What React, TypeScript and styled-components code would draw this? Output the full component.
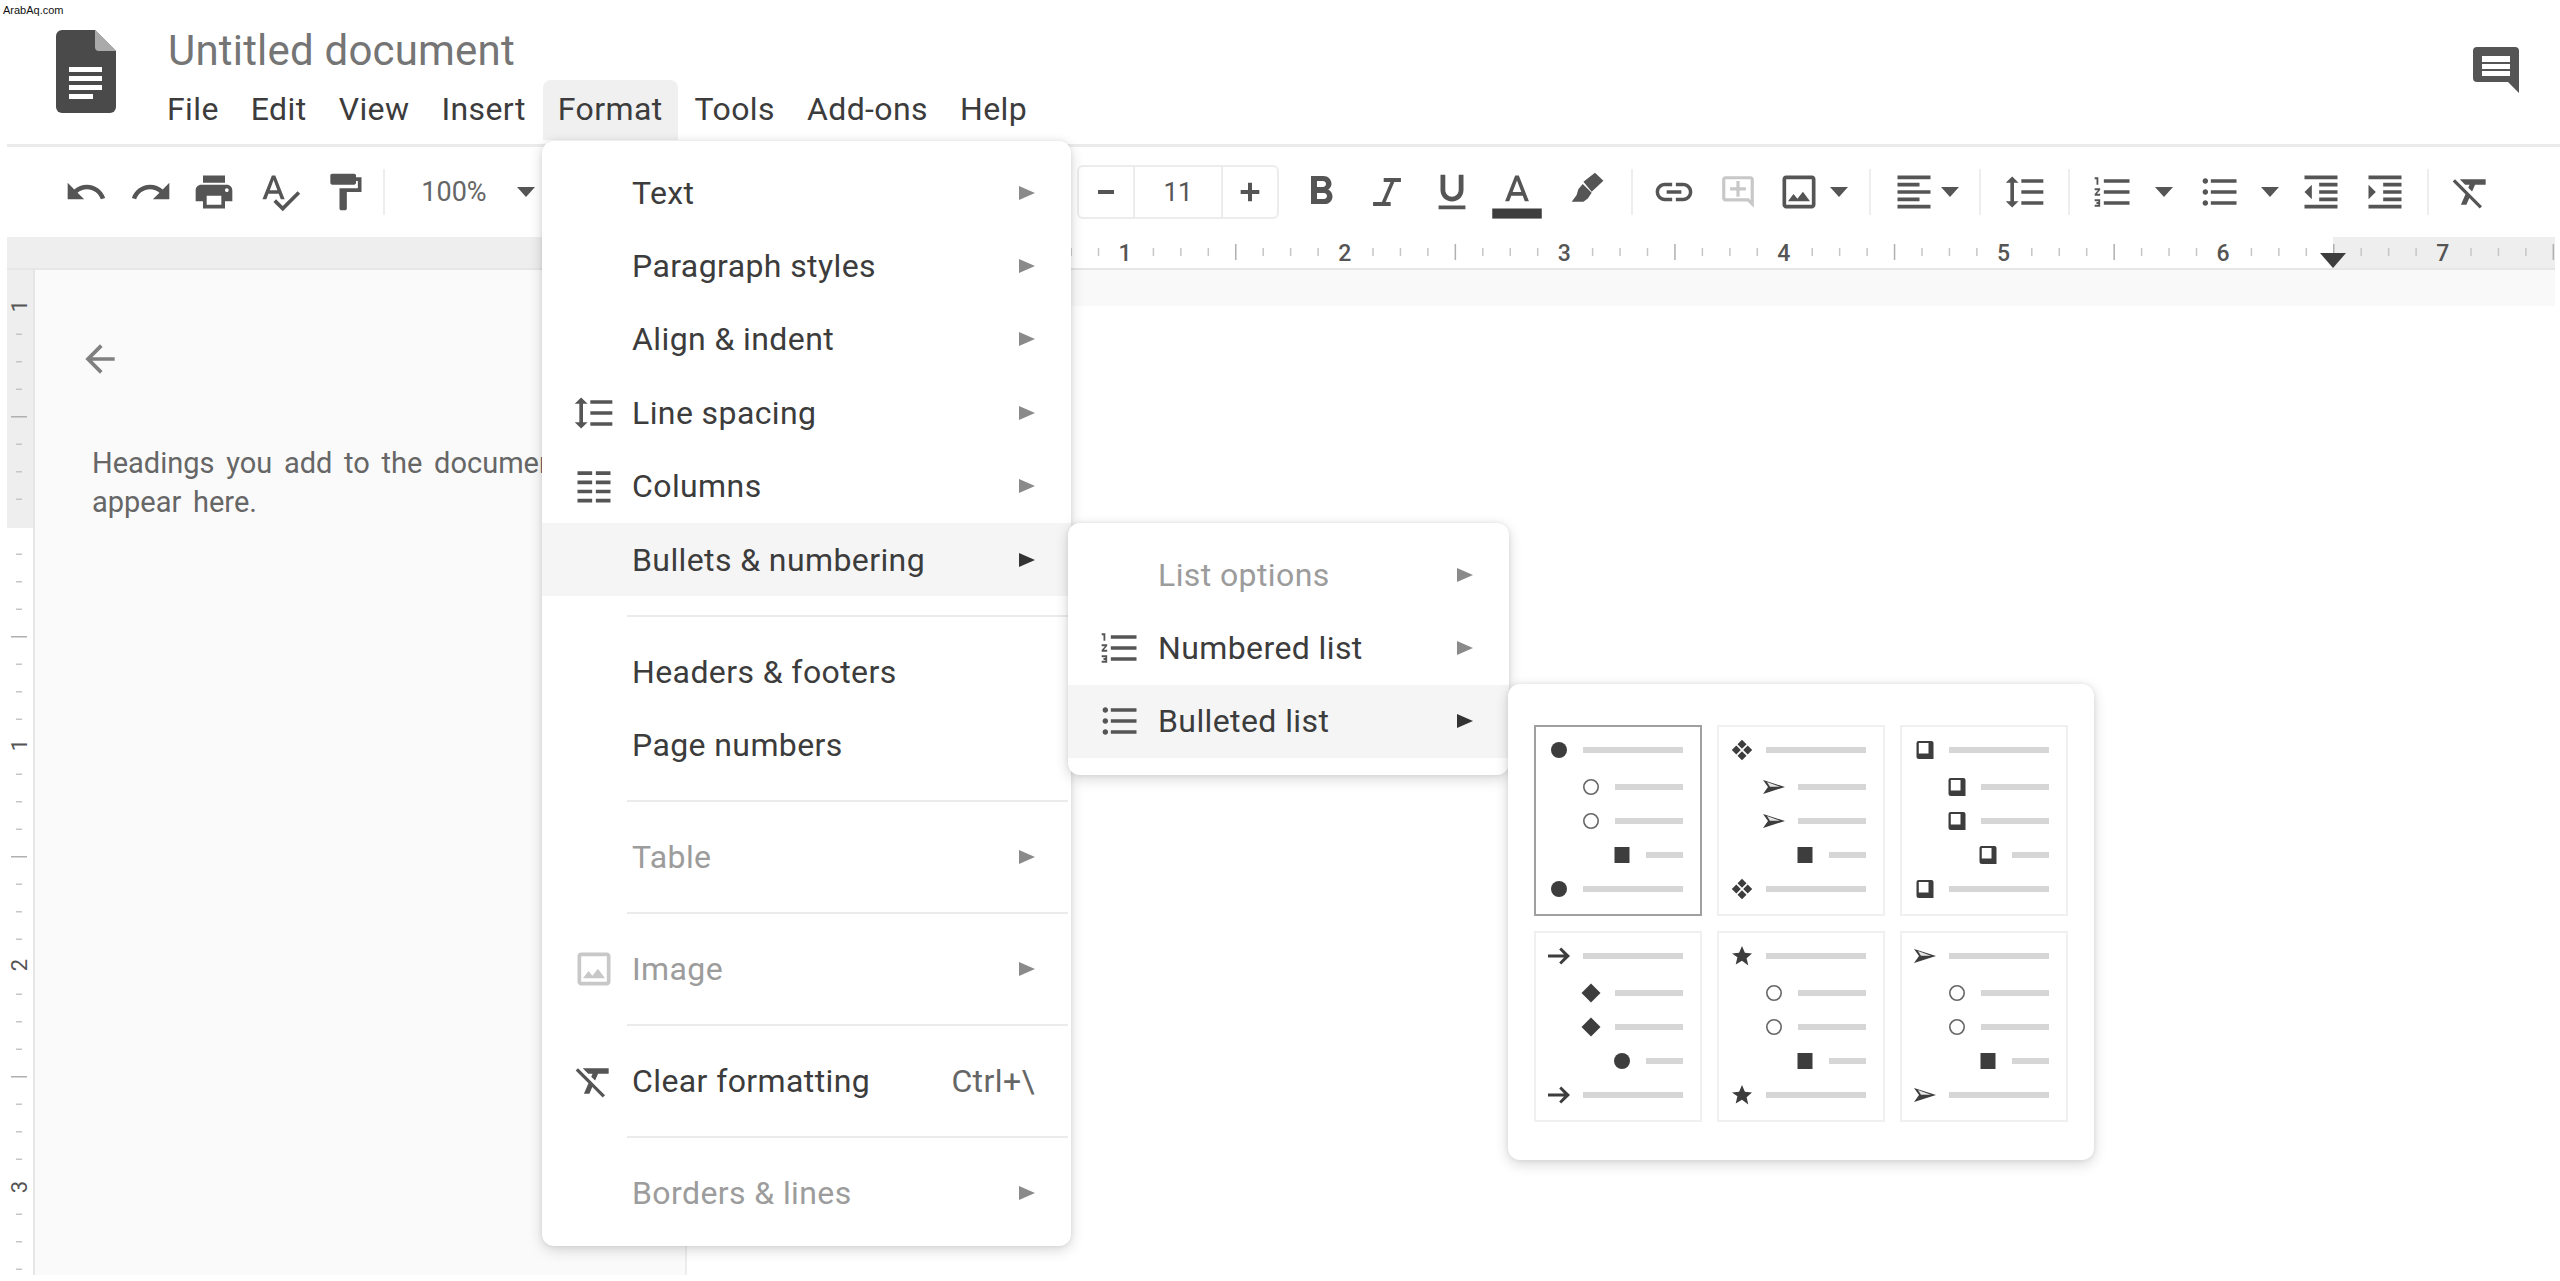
import React from "react";
import styled, { createGlobalStyle } from "styled-components";

const GlobalStyle = createGlobalStyle`
  html, body {
    margin: 0;
    padding: 0;
    background: #fff;
  }
  * {
    box-sizing: border-box;
  }
`;

const ICONS = {
  undo: "M12.5 8c-2.65 0-5.05.99-6.9 2.6L2 7v9h9l-3.62-3.62c1.39-1.16 3.16-1.88 5.12-1.88 3.54 0 6.55 2.31 7.6 5.5l2.37-.78C21.08 11.03 17.15 8 12.5 8z",
  redo: "M18.4 10.6C16.55 8.99 14.15 8 11.5 8c-4.65 0-8.58 3.03-9.96 7.22L3.9 16c1.05-3.19 4.05-5.5 7.6-5.5 1.95 0 3.73.72 5.12 1.88L13 16h9V7l-3.6 3.6z",
  print: "M19 8H5c-1.66 0-3 1.34-3 3v6h4v4h12v-4h4v-6c0-1.66-1.34-3-3-3zm-3 11H8v-5h8v5zm3-7c-.55 0-1-.45-1-1s.45-1 1-1 1 .45 1 1-.45 1-1 1zm-1-9H6v4h12V3z",
  spell: "M12.45 16h2.09L9.43 3H7.57L2.46 16h2.09l1.12-3h5.64l1.14 3zm-6.02-5L8.5 5.48 10.57 11H6.43zm15.16.59l-8.09 8.09L9.83 16l-1.41 1.41 5.09 5.09L23 13l-1.41-1.41z",
  paint: "M18 4V3c0-.55-.45-1-1-1H5c-.55 0-1 .45-1 1v4c0 .55.45 1 1 1h12c.55 0 1-.45 1-1V6h1v4H9v11c0 .55.45 1 1 1h2c.55 0 1-.45 1-1v-9h8V4h-3z",
  bold: "M15.6 10.79c.97-.67 1.65-1.77 1.65-2.79 0-2.26-1.75-4-4-4H7v14h7.04c2.09 0 3.71-1.7 3.71-3.79 0-1.52-.86-2.82-2.15-3.42zM10 6.5h3c.83 0 1.5.67 1.5 1.5s-.67 1.5-1.5 1.5h-3v-3zm3.5 9H10v-3h3.5c.83 0 1.5.67 1.5 1.5s-.67 1.5-1.5 1.5z",
  italic: "M10.2 4.4h9.4v2.2H16l-4.7 10.800H14v2.2H4.400v-2.200h4.800l4.700-10.800h-3.700z",
  underline: "M12 17c3.31 0 6-2.69 6-6V3h-2.5v8c0 1.93-1.57 3.5-3.5 3.5S8.5 12.93 8.5 11V3H6v8c0 3.31 2.69 6 6 6zm-7 2v2h14v-2H5z",
  textColor: "M11 3L5.5 17h2.25l1.12-3h6.25l1.12 3h2.25L13 3h-2zm-1.38 9L12 5.67 14.38 12H9.62z",
  marker: "M10.6 6.400L16.900 1.500l4.600 4.300-6.400 6.100zM10.200 7.700l4.900 4.700L13 15.500l-2.400 1.800H4.200l2.700-3.600.900-3.200z",
  link: "M3.9 12c0-1.71 1.39-3.1 3.1-3.1h4V7H7c-2.76 0-5 2.24-5 5s2.24 5 5 5h4v-1.9H7c-1.71 0-3.1-1.39-3.1-3.1zM8 13h8v-2H8v2zm9-6h-4v1.9h4c1.71 0 3.1 1.39 3.1 3.1s-1.39 3.1-3.1 3.1h-4V17h4c2.76 0 5-2.24 5-5s-2.24-5-5-5z",
  addComment: "M22 4c0-1.1-.9-2-2-2H4c-1.1 0-2 .9-2 2v12c0 1.1.9 2 2 2h14l4 4V4zm-2 13.17L18.83 16H4V4h16v13.17zM13 5h-2v4H7v2h4v4h2v-4h4V9h-4z",
  image: "M19 5v14H5V5h14m0-2H5c-1.1 0-2 .9-2 2v14c0 1.1.9 2 2 2h14c1.1 0 2-.9 2-2V5c0-1.1-.9-2-2-2zm-4.86 8.86l-3 3.87L9 13.14 6 17h12l-3.86-5.14z",
  alignLeft: "M15 15H3v2h12v-2zm0-8H3v2h12V7zM3 13h18v-2H3v2zm0 8h18v-2H3v2zM3 3v2h18V3H3z",
  lineSpacing: "M6 7h2.5L5 3.5 1.5 7H4v10H1.5L5 20.5 8.5 17H6V7zm4-2v2h12V5H10zm0 14h12v-2H10v2zm0-6h12v-2H10v2z",
  numbered: "M2 17h2v.5H3v1h1v.5H2v1h3v-4H2v1zm1-9h1V4H2v1h1v3zm-1 3h1.8L2 13.1v.9h3v-1H3.2L5 10.9V10H2v1zm5-6v2h14V5H7zm0 14h14v-2H7v2zm0-6h14v-2H7v2z",
  bulleted: "M4 10.5c-.83 0-1.5.67-1.5 1.5s.67 1.5 1.5 1.5 1.5-.67 1.5-1.5-.67-1.5-1.5-1.5zm0-6c-.83 0-1.5.67-1.5 1.5S3.17 7.5 4 7.5 5.5 6.83 5.5 6 4.83 4.5 4 4.5zm0 12c-.83 0-1.5.68-1.5 1.5s.68 1.5 1.5 1.5 1.5-.68 1.5-1.5-.67-1.5-1.5-1.5zM7 19h14v-2H7v2zm0-6h14v-2H7v2zm0-8v2h14V5H7z",
  indentLess: "M11 17h10v-2H11v2zm-8-5l4 4V8l-4 4zm0 9h18v-2H3v2zM3 3v2h18V3H3zm8 6h10V7H11v2zm0 4h10v-2H11v2z",
  indentMore: "M3 21h18v-2H3v2zM3 8v8l4-4-4-4zm8 9h10v-2H11v2zM3 3v2h18V3H3zm8 6h10V7H11v2zm0 4h10v-2H11v2z",
  clear: "M3.27 5L2 6.27l6.97 6.97L6.5 19h3l1.57-3.66L16.73 21 18 19.73 3.55 5.27 3.27 5zM6 5v.18L8.82 8h2.4l-.72 1.68 2.1 2.1L14.21 8H20V5H6z",
  back: "M20 11H7.83l5.59-5.59L12 4l-8 8 8 8 1.41-1.41L7.83 13H20v-2z",
  columns: "M3 4h8v2H3zM13 4h8v2h-8zM3 9h8v2H3zM13 9h8v2h-8zM3 14h8v2H3zM13 14h8v2h-8zM3 19h8v2H3zM13 19h8v2h-8z",
  minus: "M6 10.5h12v3H6z",
  plus: "M10.5 5h3v5.5H19v3h-5.5V19h-3v-5.5H5v-3h5.5z",
};

type IconName = keyof typeof ICONS;

const Svg = styled.svg<{ $color?: string }>`
  display: block;
  flex-shrink: 0;
  overflow: visible;
  fill: ${(p) => p.$color || "#555"};
`;

function Glyph({
  name,
  size = 44,
  color,
  children,
}: {
  name: IconName;
  size?: number;
  color?: string;
  children?: React.ReactNode;
}) {
  return (
    <Svg $color={color} width={size} height={size} viewBox="0 0 24 24">
      <path d={ICONS[name]} />
      {children}
    </Svg>
  );
}

const Page = styled.div`
  position: relative;
  width: 2560px;
  height: 1281px;
  overflow: hidden;
  background: #fff;
  font-family: Roboto, "Liberation Sans", sans-serif;
  color: #3c3c3c;
`;

const Watermark = styled.div`
  position: absolute;
  left: 3px;
  top: 2px;
  font-family: "Liberation Sans", Arial, sans-serif;
  font-size: 11px;
  line-height: 16px;
  color: #111;
`;

const Header = styled.header`
  display: flex;
  align-items: flex-start;
  height: 144px;
  padding: 30px 41px 0 56px;
`;

const TitleColumn = styled.div`
  display: flex;
  flex-direction: column;
  margin: -2px 0 0 36px;
`;

const Title = styled.div`
  height: 52px;
  margin-left: 16px;
  padding-top: 2px;
  font-size: 42px;
  line-height: 42px;
  letter-spacing: 0.2px;
  color: #757575;
`;

const MenuBar = styled.nav`
  display: flex;
  gap: 2px;
`;

const MenuItem = styled.div<{ $open?: boolean }>`
  height: 60px;
  padding: 0 15px;
  font-size: 32px;
  line-height: 58px;
  letter-spacing: 0.4px;
  border-radius: 8px 8px 0 0;
  background: ${(p) => (p.$open ? "#f0f0f0" : "transparent")};
`;

const CommentButton = styled.svg`
  display: block;
  margin: 17px 0 0 auto;
`;

const Toolbar = styled.div`
  display: flex;
  align-items: center;
  height: 93px;
  margin-left: 7px;
  padding: 0 57px 0 47px;
  border-top: 3px solid #ebebeb;
`;

const ToolGroup = styled.div`
  display: flex;
  align-items: center;
`;

const RightTools = styled(ToolGroup)`
  margin-left: auto;
`;

const Tool = styled.div<{ $w: number }>`
  display: flex;
  align-items: center;
  justify-content: center;
  width: ${(p) => p.$w}px;
  height: 54px;
`;

const ToolDivider = styled.div<{ $w: number }>`
  display: flex;
  justify-content: center;
  width: ${(p) => p.$w}px;
  &::before {
    content: "";
    display: block;
    width: 2px;
    height: 46px;
    background: #eee;
  }
`;

const Caret = styled.div`
  width: 0;
  height: 0;
  border-left: 9px solid transparent;
  border-right: 9px solid transparent;
  border-top: 10px solid #555;
`;

const ZoomValue = styled.div`
  font-size: 27px;
  color: #666;
`;

const FontSizeBox = styled.div`
  display: flex;
  width: 202px;
  height: 54px;
  margin-right: 10px;
  border: 2px solid #ececec;
  border-radius: 6px;
`;

const FontSizeButton = styled.div`
  display: flex;
  align-items: center;
  justify-content: center;
  width: 54px;
`;

const FontSizeValue = styled.div`
  display: flex;
  align-items: center;
  justify-content: center;
  flex: 1;
  border-left: 2px solid #ececec;
  border-right: 2px solid #ececec;
  font-size: 26px;
  color: #555;
`;

const RulerRow = styled.div`
  display: flex;
  height: 33px;
  margin: 0 5px 0 7px;
  background: #eee;
  border-bottom: 2px solid #e6e6e6;
`;

const Workspace = styled.div`
  display: flex;
  height: 1005px;
  margin-left: 7px;
`;

const Sidebar = styled.aside`
  width: 654px;
  padding: 67px 0 0 43px;
  background: #fafafa;
  border-left: 2px solid #e6e6e6;
  border-right: 2px solid #ededed;
`;

const SidebarText = styled.p`
  width: 590px;
  margin: 63px 0 0 14px;
  font-size: 29px;
  line-height: 39px;
  word-spacing: 4.5px;
  color: #666;
`;

const Canvas = styled.main`
  flex: 1;
  margin-right: 5px;
`;

const CanvasBand = styled.div`
  height: 36px;
  background: #f9f9f9;
`;

const Dropdown = styled.div`
  position: absolute;
  z-index: 3;
  background: #fff;
  border-radius: 12px;
  box-shadow: 0 4px 14px rgba(0, 0, 0, 0.16), 0 0 5px rgba(0, 0, 0, 0.08);
`;

const FormatMenu = styled(Dropdown)`
  left: 542px;
  top: 141px;
  width: 529px;
  height: 1105px;
  padding-top: 15px;
`;

const ListMenu = styled(Dropdown)`
  z-index: 4;
  left: 1068px;
  top: 523px;
  width: 441px;
  height: 252px;
  padding: 15px 0 18px;
`;

const BulletPanel = styled(Dropdown)`
  z-index: 5;
  left: 1508px;
  top: 684px;
  width: 586px;
  height: 476px;
  padding: 41px 26px 38px;
`;

const Row = styled.div<{ $active?: boolean; $disabled?: boolean }>`
  display: flex;
  align-items: center;
  height: 73.4px;
  padding: 0 36px 0 30px;
  font-size: 32px;
  letter-spacing: 0.4px;
  background: ${(p) => (p.$active ? "#f5f5f5" : "transparent")};
  color: ${(p) => (p.$disabled ? "#9c9c9c" : "#3c3c3c")};
`;

const RowIcon = styled.div`
  flex: 0 0 60px;
  display: flex;
`;

const RowLabel = styled.div`
  flex: 1;
`;

const RowArrow = styled.div<{ $active?: boolean }>`
  width: 0;
  height: 0;
  border-top: 7.5px solid transparent;
  border-bottom: 7.5px solid transparent;
  border-left: 16px solid ${(p) => (p.$active ? "#333" : "#8a8a8a")};
`;

const Shortcut = styled.div`
  color: #666;
`;

const Separator = styled.div`
  height: 2px;
  margin: 18.3px 3px 18.3px 85px;
  background: #ebebeb;
`;

const BulletGrid = styled.div`
  display: grid;
  grid-template-columns: repeat(3, 168px);
  grid-auto-rows: 191px;
  gap: 15px;
`;

const BulletCell = styled.div<{ $selected?: boolean }>`
  padding: 6px 17px 0 0;
  border: 2px solid ${(p) => (p.$selected ? "#a0a0a0" : "#f0f0f0")};
`;

const BulletRow = styled.div<{ $level: number }>`
  display: flex;
  align-items: center;
  gap: 15px;
  height: 34px;
  padding-left: ${(p) => 14 + p.$level * 31.5}px;
  &:first-child {
    margin-bottom: 3px;
  }
`;

const BulletSlot = styled.div`
  display: flex;
  justify-content: center;
  width: 18px;
`;

const BulletLine = styled.div`
  flex: 1;
  height: 6px;
  background: #d6d6d6;
`;

type BulletKind = "disc" | "hollow" | "square" | "four" | "send" | "box" | "diamond" | "star" | "arrow";

function BulletMark({ kind }: { kind: BulletKind }) {
  return (
    <Svg $color="#3d3d3d" width={24} height={24} viewBox="0 0 24 24">
      {kind === "disc" && <circle cx="12" cy="12" r="8" />}
      {kind === "hollow" && <circle cx="12" cy="12" r="7.2" fill="#fff" stroke="#666" strokeWidth="1.6" />}
      {kind === "square" && <rect x="4.5" y="4" width="15" height="16" />}
      {kind === "four" && (
        <path d="M12 1.800l4.500 4.500-4.500 4.500-4.500-4.500zM12 13.200l4.500 4.500-4.500 4.500-4.500-4.500zM6.300 7.500l4.500 4.500-4.500 4.500L1.800 12zM17.700 7.500l4.500 4.500-4.500 4.500-4.500-4.500z" />
      )}
      {kind === "send" && (
        <>
          <path d="M1 5l22 7-22 7 5-7z" />
          <path d="M5 7l13 4.800H8z" fill="#e6e6e6" />
        </>
      )}
      {kind === "box" && (
        <>
          <path d="M5.500 3H18.500a2 2 0 0 1 2 2v16H6a2.500 2.500 0 0 1-2.500-2.500V5a2 2 0 0 1 2-2z" />
          <rect x="5.800" y="5" width="9.700" height="10.500" fill="#fff" />
        </>
      )}
      {kind === "diamond" && <path d="M12 2.500l9.500 9.500-9.500 9.500L2.500 12z" />}
      {kind === "star" && <path d="M12 2l2.900 6.800 7.100.6-5.400 4.800 1.700 7.300L12 16.700l-6.300 3.800 1.700-7.300L2 9.400l7.100-.6z" />}
      {kind === "arrow" && (
        <path d="M1 10.400h16l-4.800-4.800 2-2L23 12l-8.800 8.400-2-2 4.800-4.800H1z" />
      )}
    </Svg>
  );
}

const BULLET_STYLES: BulletKind[][] = [
  ["disc", "hollow", "hollow", "square", "disc"],
  ["four", "send", "send", "square", "four"],
  ["box", "box", "box", "box", "box"],
  ["arrow", "diamond", "diamond", "disc", "arrow"],
  ["star", "hollow", "hollow", "square", "star"],
  ["send", "hollow", "hollow", "square", "send"],
];

const LEVELS = [0, 1, 1, 2, 0];

type MenuRowProps = {
  label: string;
  icon?: IconName;
  iconColor?: string;
  arrow?: boolean;
  active?: boolean;
  disabled?: boolean;
  shortcut?: string;
};

function MenuRow({ label, icon, iconColor, arrow = true, active, disabled, shortcut }: MenuRowProps) {
  return (
    <Row $active={active} $disabled={disabled}>
      <RowIcon>{icon && <Glyph name={icon} color={iconColor} />}</RowIcon>
      <RowLabel>{label}</RowLabel>
      {shortcut && <Shortcut>{shortcut}</Shortcut>}
      {arrow && <RowArrow $active={active} />}
    </Row>
  );
}

function TopRuler() {
  const ticks = [];
  // inch = 219.6px, one tick each eighth
  for (let i = 0; i < 70; i++) {
    const x = 686 + i * 27.45;
    const k = i % 8;
    if (k === 0) continue;
    ticks.push(
      <rect key={i} x={x} y={k === 4 ? 7 : 11} width="1.500" height={k === 4 ? 16 : 8} fill={k === 4 ? "#b0b0b0" : "#c6c6c6"} />
    );
  }
  return (
    <svg width="1868" height="31" viewBox="687 0 1868 31" style={{ display: "block", marginLeft: "auto" }}>
      <rect x="687" y="0" width="1646" height="31" fill="#fff" />
      {ticks}
      {[1, 2, 3, 4, 5, 6, 7].map((n) => (
        <text key={n} x={905.500 + n * 219.600} y="24" textAnchor="middle" fontSize="23" fontWeight="500" fontFamily="Roboto, sans-serif" fill="#555">
          {n}
        </text>
      ))}
      <path d="M2320 16h26l-13 15z" fill="#3d3d3d" />
    </svg>
  );
}

function SideRuler() {
  const ticks = [];
  for (let i = 0; i < 36; i++) {
    const y = 306 + i * 27.5;
    const k = i % 8;
    if (k === 0) continue;
    ticks.push(
      <rect key={i} x={k === 4 ? 4 : 9} y={y} width={k === 4 ? 16 : 6} height="1.500" fill={k === 4 ? "#b0b0b0" : "#c6c6c6"} />
    );
  }
  const digits: [string, number][] = [
    ["1", 306],
    ["1", 745],
    ["2", 965],
    ["3", 1187],
  ];
  return (
    <svg width="26" height="1005" viewBox="7 270 26 1005" style={{ display: "block", flexShrink: 0 }}>
      <rect x="7" y="270" width="26" height="258" fill="#eee" />
      <g transform="translate(7 0)">
        {ticks}
        {digits.map(([d, y]) => (
          <text key={y} transform={`translate(20 ${y}) rotate(-90)`} textAnchor="middle" fontSize="22" fontFamily="Roboto, sans-serif" fill="#555">
            {d}
          </text>
        ))}
      </g>
    </svg>
  );
}

export default function App() {
  return (
    <Page>
      <GlobalStyle />
      <Watermark>ArabAq.com</Watermark>
      <Header>
        <svg width="60" height="83" viewBox="0 0 60 83" style={{ display: "block", flexShrink: 0 }}>
          <path d="M6 0h33l21 21v56a6 6 0 0 1-6 6H6a6 6 0 0 1-6-6V6a6 6 0 0 1 6-6z" fill="#4a4a4a" />
          <path d="M39 0l21 21H43a4 4 0 0 1-4-4z" fill="#aaa" />
          <path d="M13 37h33v5H13zM13 46h33v5H13zM13 55h33v5H13zM13 64h24v5H13z" fill="#fff" />
        </svg>
        <TitleColumn>
          <Title>Untitled document</Title>
          <MenuBar>
            <MenuItem>File</MenuItem>
            <MenuItem>Edit</MenuItem>
            <MenuItem>View</MenuItem>
            <MenuItem>Insert</MenuItem>
            <MenuItem $open>Format</MenuItem>
            <MenuItem>Tools</MenuItem>
            <MenuItem>Add-ons</MenuItem>
            <MenuItem>Help</MenuItem>
          </MenuBar>
        </TitleColumn>
        <CommentButton width="46" height="46" viewBox="0 0 46 46">
          <path d="M4 0h38a4 4 0 0 1 4 4v42L35 35H4a4 4 0 0 1-4-4V4a4 4 0 0 1 4-4z" fill="#555" />
          <path d="M9 9h28v6H9zM9 17h28v5H9zM9 24h28v5H9z" fill="#fff" />
        </CommentButton>
      </Header>

      <Toolbar>
        <ToolGroup>
          <Tool $w={64}><Glyph name="undo" /></Tool>
          <Tool $w={66}><Glyph name="redo" /></Tool>
          <Tool $w={60}><Glyph name="print" /></Tool>
          <Tool $w={72}><Glyph name="spell" /></Tool>
          <Tool $w={58}><Glyph name="paint" /></Tool>
          <ToolDivider $w={20} />
          <Tool $w={120}><ZoomValue>100%</ZoomValue></Tool>
          <Tool $w={24}><Caret /></Tool>
        </ToolGroup>
        <RightTools>
          <FontSizeBox>
            <FontSizeButton><Glyph name="minus" size={32} /></FontSizeButton>
            <FontSizeValue>11</FontSizeValue>
            <FontSizeButton><Glyph name="plus" size={32} /></FontSizeButton>
          </FontSizeBox>
          <Tool $w={64}><Glyph name="bold" size={48} /></Tool>
          <Tool $w={68}><Glyph name="italic" /></Tool>
          <Tool $w={62}><Glyph name="underline" size={46} /></Tool>
          <Tool $w={68}>
            <Glyph name="textColor">
              <rect x="-1.500" y="21" width="27" height="5.500" fill="#3d3d3d" />
            </Glyph>
          </Tool>
          <Tool $w={70}><Glyph name="marker" /></Tool>
          <ToolDivider $w={22} />
          <Tool $w={62}><Glyph name="link" /></Tool>
          <Tool $w={66}><Glyph name="addComment" size={38} color="#c8c8c8" /></Tool>
          <Tool $w={56}><Glyph name="image" /></Tool>
          <Tool $w={24}><Caret /></Tool>
          <ToolDivider $w={38} />
          <Tool $w={50}><Glyph name="alignLeft" /></Tool>
          <Tool $w={22}><Caret /></Tool>
          <ToolDivider $w={38} />
          <Tool $w={52}><Glyph name="lineSpacing" /></Tool>
          <ToolDivider $w={36} />
          <Tool $w={52}><Glyph name="numbered" /></Tool>
          <Tool $w={50}><Caret /></Tool>
          <Tool $w={62}><Glyph name="bulleted" /></Tool>
          <Tool $w={38}><Caret /></Tool>
          <Tool $w={64}><Glyph name="indentLess" /></Tool>
          <Tool $w={64}><Glyph name="indentMore" /></Tool>
          <ToolDivider $w={22} />
          <Tool $w={64}><Glyph name="clear" /></Tool>
        </RightTools>
      </Toolbar>

      <RulerRow>
        <TopRuler />
      </RulerRow>

      <Workspace>
        <SideRuler />
        <Sidebar>
          <Glyph name="back" color="#808080" />
          <SidebarText>Headings you add to the document will appear here.</SidebarText>
        </Sidebar>
        <Canvas>
          <CanvasBand />
        </Canvas>
      </Workspace>

      <FormatMenu>
        <MenuRow label="Text" />
        <MenuRow label="Paragraph styles" />
        <MenuRow label="Align & indent" />
        <MenuRow label="Line spacing" icon="lineSpacing" />
        <MenuRow label="Columns" icon="columns" />
        <MenuRow label="Bullets & numbering" active />
        <Separator />
        <MenuRow label="Headers & footers" arrow={false} />
        <MenuRow label="Page numbers" arrow={false} />
        <Separator />
        <MenuRow label="Table" disabled />
        <Separator />
        <MenuRow label="Image" icon="image" iconColor="#c8c8c8" disabled />
        <Separator />
        <MenuRow label="Clear formatting" icon="clear" arrow={false} shortcut="Ctrl+\" />
        <Separator />
        <MenuRow label="Borders & lines" disabled />
      </FormatMenu>

      <ListMenu>
        <MenuRow label="List options" disabled />
        <MenuRow label="Numbered list" icon="numbered" />
        <MenuRow label="Bulleted list" icon="bulleted" active />
      </ListMenu>

      <BulletPanel>
        <BulletGrid>
          {BULLET_STYLES.map((marks, i) => (
            <BulletCell key={i} $selected={i === 0}>
              {marks.map((kind, j) => (
                <BulletRow key={j} $level={LEVELS[j]}>
                  <BulletSlot><BulletMark kind={kind} /></BulletSlot>
                  <BulletLine />
                </BulletRow>
              ))}
            </BulletCell>
          ))}
        </BulletGrid>
      </BulletPanel>
    </Page>
  );
}
